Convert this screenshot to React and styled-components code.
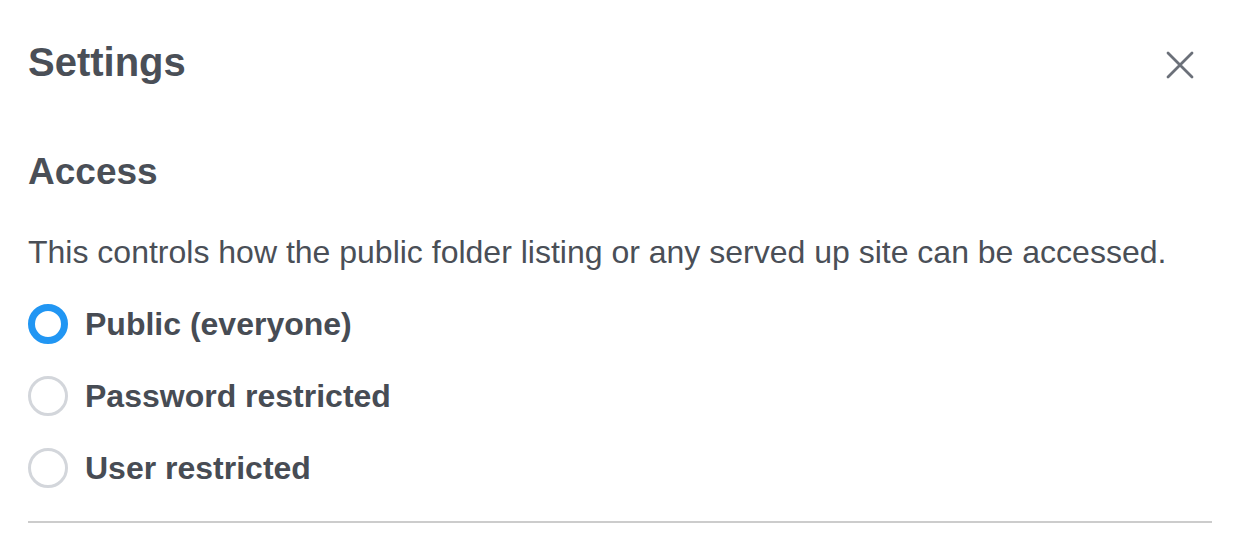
import styled, { createGlobalStyle } from "styled-components";
import { useState } from "react";

const GlobalStyle = createGlobalStyle`
  html, body {
    margin: 0;
    padding: 0;
    background: #ffffff;
    font-family: "Liberation Sans", Arial, sans-serif;
    color: #4a4f57;
  }
`

const options = [
  { id: "public", label: "Public (everyone)" },
  { id: "password", label: "Password restricted" },
  { id: "user", label: "User restricted" },
];

const App = () => {
  const [access, setAccess] = useState("public");

  return (
    <>
      <GlobalStyle />
      <Panel>
        <Header>
          <Title>Settings</Title>
          <CloseButton aria-label="Close">
            <svg width="30" height="30" viewBox="0 0 30 30" fill="none">
              <path d="M3 3 L27 27 M27 3 L3 27" stroke="#6b7079" strokeWidth="2.8" strokeLinecap="round" />
            </svg>
          </CloseButton>
        </Header>
        <Section>
          <SectionTitle>Access</SectionTitle>
          <Description>
            This controls how the public folder listing or any served up site can be accessed.
          </Description>
          <RadioList>
            {options.map((opt) => (
              <RadioRow key={opt.id} onClick={() => setAccess(opt.id)}>
                <RadioCircle checked={access === opt.id} />
                <RadioLabel>{opt.label}</RadioLabel>
              </RadioRow>
            ))}
          </RadioList>
        </Section>
        <Divider />
      </Panel>
    </>
  );
}

export default App;

const Panel = styled.div`
  padding: 0 40px 0 28px;
  box-sizing: border-box;
  width: 1252px;
`

const Header = styled.div`
  display: flex;
  align-items: center;
  justify-content: space-between;
  height: 124px;
`

const Title = styled.h1`
  margin: 0;
  font-size: 40px;
  font-weight: 700;
  color: #4a4f57;
`

const CloseButton = styled.button`
  border: none;
  background: none;
  padding: 0;
  margin: 6px 17px 0 0;
  display: flex;
  cursor: pointer;
`

const Section = styled.div`
  display: flex;
  flex-direction: column;
`

const SectionTitle = styled.h2`
  margin: 24px 0 0;
  font-size: 37px;
  font-weight: 700;
  line-height: 48px;
`

const Description = styled.p`
  margin: 36px 0 0;
  font-size: 32px;
  line-height: 40px;
`

const RadioList = styled.div`
  display: flex;
  flex-direction: column;
  gap: 32px;
  margin-top: 32px;
`

const RadioRow = styled.label`
  display: flex;
  align-items: center;
  gap: 17px;
  height: 40px;
  cursor: pointer;
`

const RadioCircle = styled.span`
  width: 40px;
  height: 40px;
  box-sizing: border-box;
  border-radius: 50%;
  flex-shrink: 0;
  ${(props) => props.checked ? `
    border: 7px solid #2196f3;
  ` : `
    border: 3px solid #d3d6db;
  `}
`

const RadioLabel = styled.span`
  font-size: 32px;
  font-weight: 700;
  color: #474c54;
`

const Divider = styled.hr`
  margin: 33px 0 0;
  border: none;
  height: 2px;
  background: #cccccc;
`
